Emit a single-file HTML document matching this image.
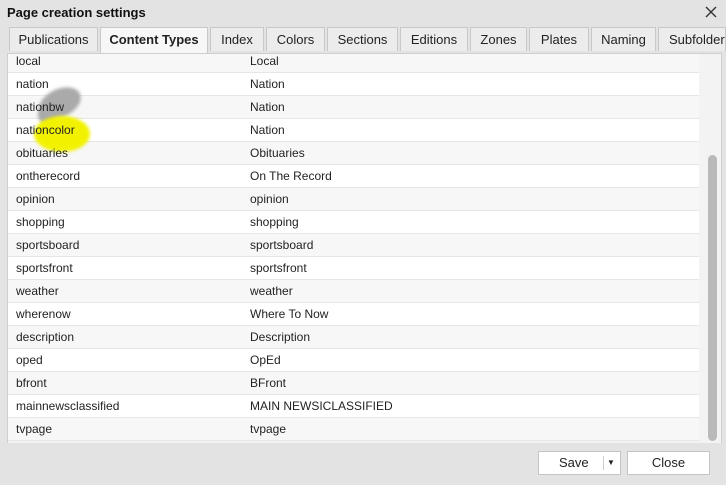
<!DOCTYPE html><html><head><style>
body{margin:0;width:726px;height:485px;background:#e3e3e3;font-family:"Liberation Sans",Arial,sans-serif;font-size:12px;color:#222;position:relative;overflow:hidden}
.t{position:absolute;left:7px;top:5px;font-weight:bold;font-size:13px;color:#111}
.x{position:absolute;left:705px;top:6px}
.tab{position:absolute;top:27px;height:24px;line-height:24px;text-align:center;background:#ececec;border:1px solid #c8c8c8;border-bottom:none;font-size:13px;color:#222;box-sizing:border-box;overflow:hidden;white-space:nowrap}
.tab.a{background:#f7f7f7;font-weight:bold;height:27px}
.panel{position:absolute;left:7px;top:53px;width:715px;height:390px;background:#f3f3f3;border:1px solid #cfcfcf;border-bottom:none;overflow:hidden;box-sizing:border-box}
.rows{position:absolute;left:0;top:-4px;width:691px}
.r{height:22px;line-height:22px;border-bottom:1px solid #e6e6e6;background:#fff;position:relative}
.r.s{background:#f7f7f7}
.r span{position:absolute;left:8px;z-index:2}
.r span+span{left:242px}
.sb{position:absolute;left:700px;top:101px;width:9px;height:286px;background:#b9b9b9;border-radius:5px}
.btn{position:absolute;top:451px;height:24px;background:#fff;border:1px solid #c4c4c4;box-sizing:border-box;text-align:center;line-height:22px;font-size:13px}
.sm{position:absolute;z-index:1;border-radius:50%;filter:blur(1.5px)}
</style></head><body>
<div class="t">Page creation settings</div>
<svg class="x" width="12" height="12" viewBox="0 0 12 12"><path d="M1 1L11 11M11 1L1 11" stroke="#333" stroke-width="1.4"/></svg>
<div class="tab" style="left:9px;width:89px">Publications</div>
<div class="tab a" style="left:100px;width:108px">Content Types</div>
<div class="tab" style="left:210px;width:54px">Index</div>
<div class="tab" style="left:266px;width:59px">Colors</div>
<div class="tab" style="left:327px;width:71px">Sections</div>
<div class="tab" style="left:400px;width:68px">Editions</div>
<div class="tab" style="left:470px;width:57px">Zones</div>
<div class="tab" style="left:529px;width:60px">Plates</div>
<div class="tab" style="left:591px;width:65px">Naming</div>
<div class="tab" style="left:658px;width:68px;text-align:left;padding-left:10px">Subfolders</div>
<div class="panel"><div class="rows">
<div class="r s"><span>local</span><span>Local</span></div>
<div class="r"><span>nation</span><span>Nation</span></div>
<div class="r s"><span>nationbw</span><span>Nation</span></div>
<div class="r"><span>nationcolor</span><span>Nation</span></div>
<div class="r s"><span>obituaries</span><span>Obituaries</span></div>
<div class="r"><span>ontherecord</span><span>On The Record</span></div>
<div class="r s"><span>opinion</span><span>opinion</span></div>
<div class="r"><span>shopping</span><span>shopping</span></div>
<div class="r s"><span>sportsboard</span><span>sportsboard</span></div>
<div class="r"><span>sportsfront</span><span>sportsfront</span></div>
<div class="r s"><span>weather</span><span>weather</span></div>
<div class="r"><span>wherenow</span><span>Where To Now</span></div>
<div class="r s"><span>description</span><span>Description</span></div>
<div class="r"><span>oped</span><span>OpEd</span></div>
<div class="r s"><span>bfront</span><span>BFront</span></div>
<div class="r"><span>mainnewsclassified</span><span>MAIN NEWSICLASSIFIED</span></div>
<div class="r s"><span>tvpage</span><span>tvpage</span></div>
</div>
<div class="sm" style="left:30px;top:35px;width:44px;height:28px;background:#aaa;transform:rotate(-25deg)"></div>
<div class="sm" style="left:30px;top:52px;width:18px;height:18px;background:#aaa"></div>
<div class="sm" style="left:26px;top:62px;width:56px;height:36px;background:#f2f200"></div>
<div class="sb"></div></div>
<div class="btn" style="left:538px;width:83px;text-align:left;padding-left:20px">Save<span style="position:absolute;left:64px;top:4px;height:14px;border-left:1px solid #ccc"></span><span style="position:absolute;left:68px;top:0;font-size:8px">▼</span></div>
<div class="btn" style="left:627px;width:83px">Close</div>
</body></html>
